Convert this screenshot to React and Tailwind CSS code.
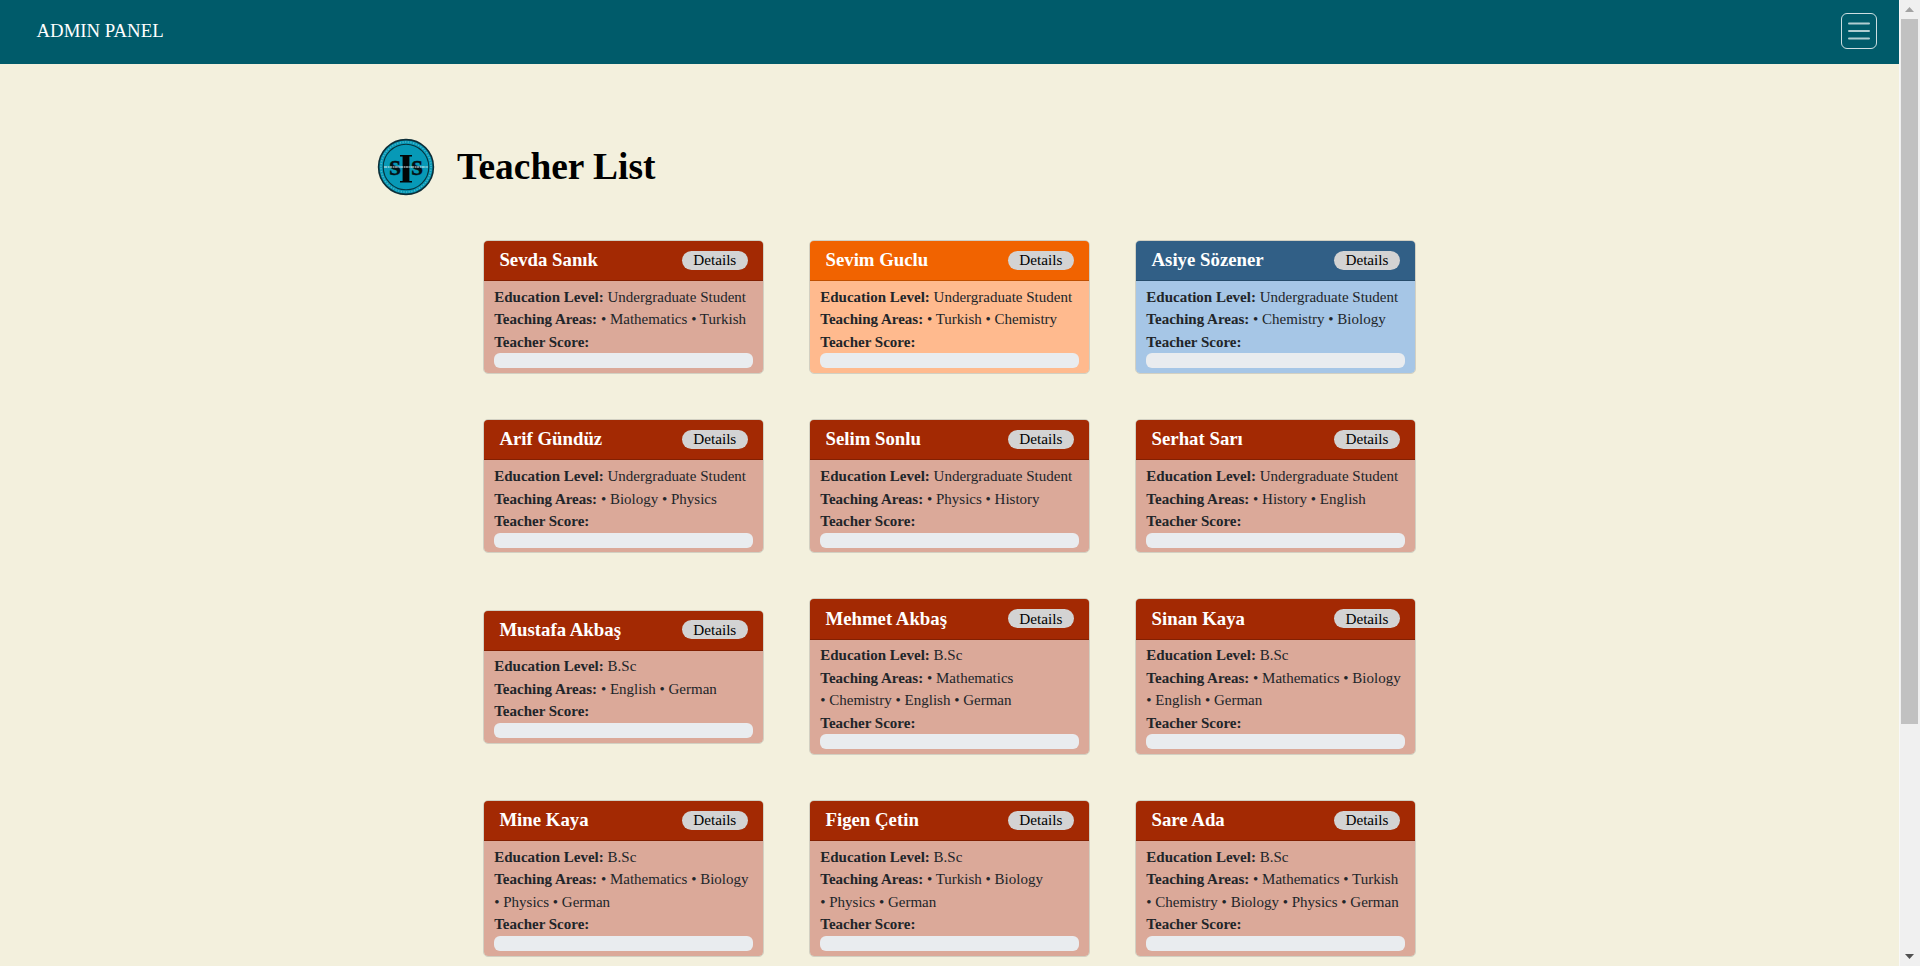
const themes = {
  red: { card: "bg-[#dba999]", header: "bg-[#a32903]" },
  orange: { card: "bg-[#ffba8e]", header: "bg-[#f16300]" },
  blue: { card: "bg-[#a6c6e6]", header: "bg-[#315f86]" },
};

const UG = "Undergraduate Student";
const BSC = "B.Sc";

const teachers = [
  { name: "Sevda Sanık", level: UG, areas: ["Mathematics", "Turkish"], theme: "red" },
  { name: "Sevim Guclu", level: UG, areas: ["Turkish", "Chemistry"], theme: "orange" },
  { name: "Asiye Sözener", level: UG, areas: ["Chemistry", "Biology"], theme: "blue" },
  { name: "Arif Gündüz", level: UG, areas: ["Biology", "Physics"], theme: "red" },
  { name: "Selim Sonlu", level: UG, areas: ["Physics", "History"], theme: "red" },
  { name: "Serhat Sarı", level: UG, areas: ["History", "English"], theme: "red" },
  { name: "Mustafa Akbaş", level: BSC, areas: ["English", "German"], theme: "red" },
  { name: "Mehmet Akbaş", level: BSC, areas: ["Mathematics", "Chemistry", "English", "German"], theme: "red" },
  { name: "Sinan Kaya", level: BSC, areas: ["Mathematics", "Biology", "English", "German"], theme: "red" },
  { name: "Mine Kaya", level: BSC, areas: ["Mathematics", "Biology", "Physics", "German"], theme: "red" },
  { name: "Figen Çetin", level: BSC, areas: ["Turkish", "Biology", "Physics", "German"], theme: "red" },
  { name: "Sare Ada", level: BSC, areas: ["Mathematics", "Turkish", "Chemistry", "Biology", "Physics", "German"], theme: "red" },
];

function TeacherCard({ teacher }) {
  const theme = themes[teacher.theme];
  return (
    <article className={`w-full overflow-hidden rounded-[5px] border border-[#d2d0c2] bg-clip-padding text-[15px] leading-[22.5px] text-[#212529] ${theme.card}`}>
      <header className={`flex h-[40.3px] items-center justify-between border-b border-black/20 pr-[14.800px] pl-[15.200px] pb-[0.800px] ${theme.header}`}>
        <h2 className="text-[18.8px] leading-5 font-bold text-white">{teacher.name}</h2>
        <button className="h-[19px] w-[66px] rounded-[10px] bg-[#d3d3d3] text-center text-[15.2px] leading-[18px] text-black">Details</button>
      </header>
      <div className="px-[10px] pt-[4.600px] pb-[4.600px]">
        <p><b>Education Level:</b> {teacher.level}</p>
        <p>
          <b>Teaching Areas:</b>{" "}
          {teacher.areas.map((area) => (
            <span key={area}><span className="whitespace-nowrap">• {area}</span>{" "}</span>
          ))}
        </p>
        <p><b>Teacher Score:</b></p>
        <div className="h-[15px] rounded-[6px] bg-[#e9ecef]" />
      </div>
    </article>
  );
}

function Logo() {
  return (
    <svg className="size-[58px]" viewBox="0 0 58 58">
      <circle cx="29" cy="29" r="27.4" fill="#0799b7" stroke="#0c2e38" strokeWidth="1.6" />
      <circle cx="29" cy="29" r="25" fill="none" stroke="#47b4ca" strokeWidth="1.6" strokeDasharray="1.2 1.5" />
      <circle cx="29" cy="29" r="22.8" fill="none" stroke="#07333d" strokeWidth="1.1" />
      <g fill="#041014" stroke="#041014" strokeWidth=".3" fontFamily="Liberation Serif, serif" fontWeight="bold" textAnchor="middle">
        <text x="18.2" y="36.5" fontSize="30">s</text>
        <text x="40" y="36.5" fontSize="30">s</text>
      </g>
      <path d="M23 17h12v1.500h-2.600v24.500H35V44.500H23V43h2.600V18.500H23z" fill="#020506" />
      <path d="M7 29h44" stroke="#d9eff2" strokeWidth="1.6" strokeDasharray="3 .6 1.4 .4" opacity=".7" />
    </svg>
  );
}

function ScrollBar() {
  return (
    <div className="flex w-[21px] shrink-0 flex-col items-center border-l border-[#f8f8f8] bg-[#f0f0f0] pr-px">
      <svg className="h-[19px] w-[17px] shrink-0" viewBox="0 0 17 19"><path d="M4 12h9L8.500 7z" fill="#a3a3a3" /></svg>
      <div className="h-[705px] w-[17px] shrink-0 bg-[#c1c1c1]" />
      <svg className="mt-auto h-[17px] w-[17px] shrink-0" viewBox="0 0 17 17"><path d="M4 5h9L8.500 10z" fill="#505050" /></svg>
    </div>
  );
}

export default function App() {
  return (
    <div className="flex h-[966px] w-full overflow-hidden bg-[#f3f0dd] font-['Liberation_Serif',serif]">
      <div className="min-w-0 flex-1 overflow-hidden">
        <nav className="flex h-16 items-center justify-between bg-[#005b6a] pr-[22px] pb-[2px] pl-[36.500px]">
          <span className="text-[18.8px] text-white">ADMIN PANEL</span>
          <button className="flex size-9 items-center justify-center rounded-[6px] border border-white/80">
            <svg className="size-6" viewBox="0 0 24 24" fill="none" stroke="#b0cdd1" strokeWidth="2" strokeLinecap="round">
              <path d="M2 4.500h20M2 12h20M2 19.500h20" />
            </svg>
          </button>
        </nav>
        <div className="mt-[74px] ml-[377px] flex h-[58px] items-center gap-[22px]">
          <Logo />
          <h1 className="text-[37.4px] leading-[48px] font-bold text-black">Teacher List</h1>
        </div>
        <main className="mt-[44px] ml-[483.2px] grid grid-cols-[280.4px_280.4px_280.4px] items-center gap-x-[45.7px] gap-y-[45.2px]">
          {teachers.map((teacher) => <TeacherCard key={teacher.name} teacher={teacher} />)}
        </main>
      </div>
      <ScrollBar />
    </div>
  );
}
